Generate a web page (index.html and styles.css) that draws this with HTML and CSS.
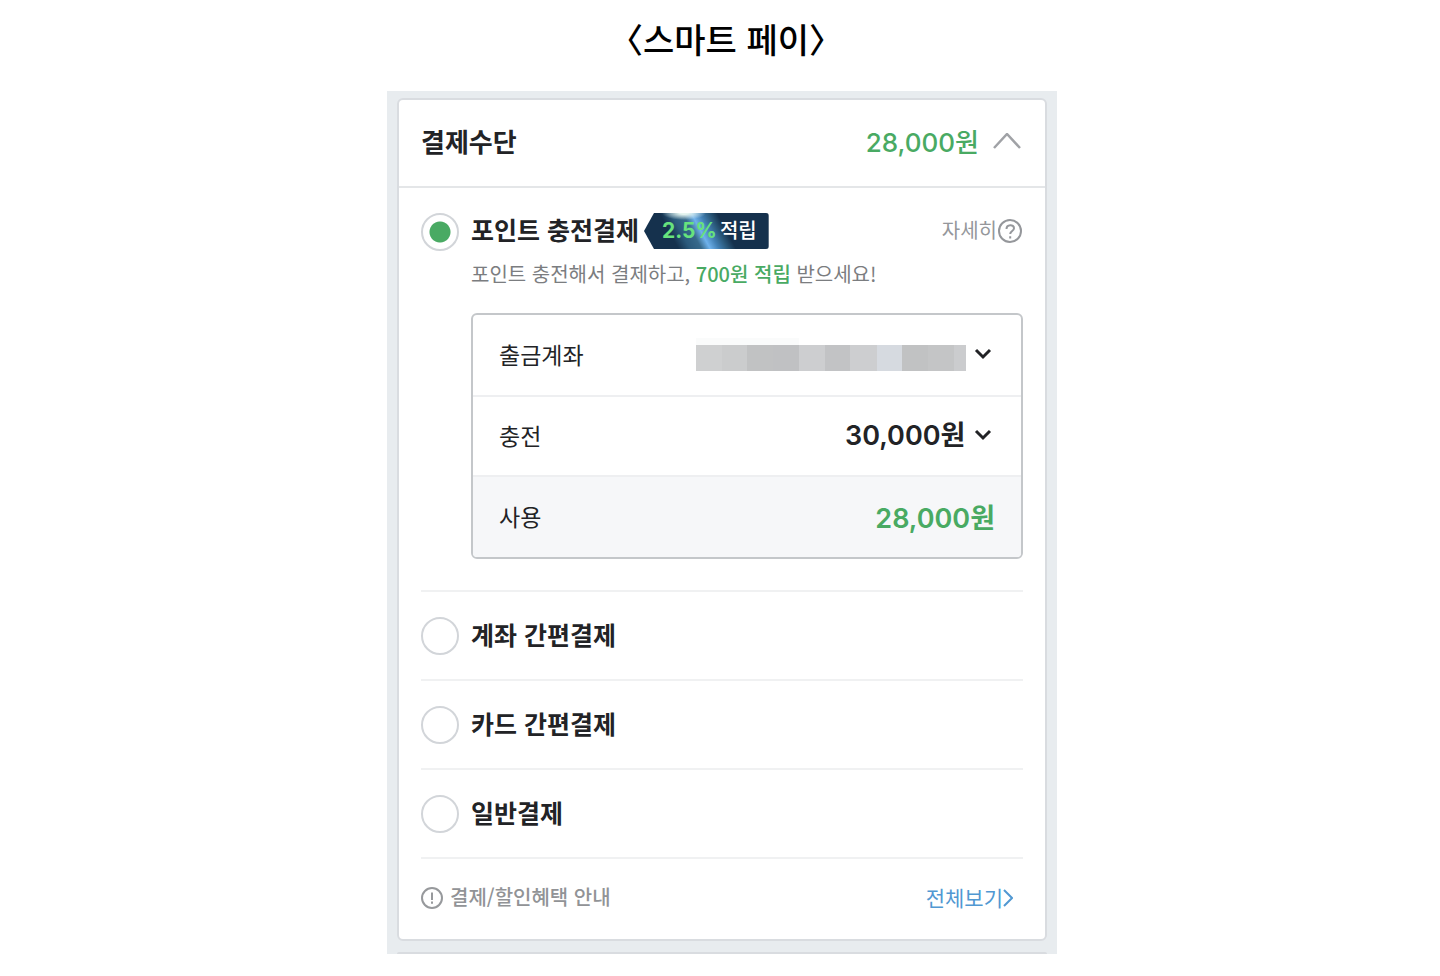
FILE: index.html
```html
<!DOCTYPE html>
<html lang="ko">
<head>
  <meta charset="UTF-8">
  <meta name="viewport" content="width=device-width, initial-scale=1.0">
  <title>스마트 페이</title>
  <link rel="stylesheet" href="styles.css">
</head>
<body>
  <h1>〈스마트 페이〉</h1>
  <main class="panel">
    <section class="card">
      <header class="card-header">
        <h2>결제수단</h2>
        <span class="total">28,000원</span>
        <button class="toggle" type="button" aria-label="접기">
          <svg width="28" height="16" viewBox="0 0 28 16" fill="none" stroke="#a0a2a6" stroke-width="2.500"><path d="M1 15 14 1l13 14"/></svg>
        </button>
      </header>

      <form class="methods">
        <div class="method point">
          <input type="radio" name="method" id="point" checked>
          <div class="point-body">
            <div class="point-title">
              <label for="point">포인트 충전결제</label>
              <span class="badge"><b>2.5%</b><span>적립</span></span>
              <a href="#" class="detail"><span>자세히</span><svg width="26" height="26" viewBox="0 0 26 26" fill="none" stroke="#95979b" stroke-width="2"><circle cx="13" cy="13" r="11"/><path d="M9.500 11c0-5 7.500-5 7.500-.8 0 2.800-3.800 2.700-3.800 5.800M13.200 18.200v2.300"/></svg></a>
            </div>
            <p class="desc">포인트 충전해서 결제하고, <em>700원 적립</em> 받으세요!</p>

            <div class="charge-box">
              <div class="row">
                <label for="account">출금계좌</label>
                <select id="account" class="masked"><option></option></select>
                <svg class="chevron" width="18" height="12" viewBox="0 0 18 12"><path d="m2 2 7 7 7-7"/></svg>
              </div>
              <div class="row">
                <label for="charge">충전</label>
                <select id="charge"><option>30,000원</option></select>
                <svg class="chevron" width="18" height="12" viewBox="0 0 18 12"><path d="m2 2 7 7 7-7"/></svg>
              </div>
              <div class="row use">
                <span>사용</span>
                <strong>28,000원</strong>
              </div>
            </div>
          </div>
        </div>

        <div class="method">
          <input type="radio" name="method" id="bank">
          <label for="bank">계좌 간편결제</label>
        </div>
        <div class="method">
          <input type="radio" name="method" id="credit">
          <label for="credit">카드 간편결제</label>
        </div>
        <div class="method">
          <input type="radio" name="method" id="normal">
          <label for="normal">일반결제</label>
        </div>
      </form>

      <footer class="card-footer">
        <svg width="22" height="22" viewBox="0 0 22 22" fill="none" stroke="#97999c" stroke-width="2"><circle cx="11" cy="11" r="10"/><path d="M11 5.500v7.500M11 14.500v2.200"/></svg>
        <span>결제/할인혜택 안내</span>
        <a href="#"><span>전체보기</span><svg width="10" height="18" viewBox="0 0 10 18" fill="none" stroke="#5198d2" stroke-width="2"><path d="m1 1 8 8-8 8"/></svg></a>
      </footer>
    </section>
    <div class="next-card"></div>
  </main>
</body>
</html>
```
FILE: styles.css
```css
* {
  box-sizing: border-box;
}
body {
  margin: 0;
  padding-left: 4px;
  background: #fff;
  color: #222326;
  font-family: "Noto Sans CJK KR", sans-serif;
}
h1 {
  margin: 0;
  padding: 15px 0 28px 8px;
  font-size: 34px;
  line-height: 48px;
  font-weight: 500;
  text-align: center;
  color: #000;
}
h2 {
  margin: 0;
  padding-bottom: 4px;
  font-size: 26px;
  line-height: 40px;
}
button {
  border: 0;
  padding: 0;
  background: none;
}
svg {
  display: block;
  flex: none;
}
a {
  display: flex;
  align-items: center;
  text-decoration: none;
}
.panel {
  max-width: 670px;
  margin: 0 auto;
  padding: 7px 10px 0;
  background: #e8ecef;
}
.card {
  border: 2px solid #d9dce0;
  border-radius: 6px;
  background: #fff;
}
.card-header {
  display: flex;
  align-items: center;
  height: 88px;
  padding: 0 24px 0 22px;
  border-bottom: 2px solid #e4e6e8;
}
.total {
  margin-left: auto;
  color: #49aa63;
  font-family: Inter, "Noto Sans CJK KR", sans-serif;
  font-size: 26px;
  line-height: 40px;
  font-weight: 500;
}
.toggle {
  margin-left: 14px;
  padding-bottom: 4px;
}
.methods {
  padding: 0 22px;
}
.method {
  display: flex;
  align-items: center;
  gap: 12px;
  padding: 25px 0 24px;
  border-bottom: 2px solid #f0f1f2;
}
.method > label,
.point-title label {
  padding-bottom: 4px;
  font-size: 25px;
  line-height: 34px;
  font-weight: 700;
}
.point {
  align-items: flex-start;
  padding-bottom: 31px;
}
.point-body {
  flex: 1;
}
.point-title {
  display: flex;
  align-items: center;
  height: 36px;
}
input[type="radio"] {
  appearance: none;
  flex: none;
  width: 38px;
  height: 38px;
  margin: 0;
  border: 2px solid #d2d5d9;
  border-radius: 50%;
}
input[type="radio"]:checked {
  background: radial-gradient(circle, #49aa63 10px, transparent 11px);
}
.badge {
  display: flex;
  align-items: center;
  gap: 3px;
  margin-left: 5px;
  padding: 0 12px 0 18px;
  border-radius: 3px;
  background:
    radial-gradient(ellipse 22px 7px at 32% 0, #e6f5f0 20%, transparent),
    linear-gradient(62deg, transparent 24%, #2b5a7c 32%, #37698b 40%, #6fb2ec 46%, #4280b4 52%, #2b5a7c 58%, transparent 64%),
    #15314d;
  clip-path: polygon(8% 0, 100% 0, 100% 100%, 8% 100%, 0 50%);
  color: #fff;
  font-size: 20px;
  line-height: 36px;
  font-weight: 500;
}
.badge b {
  color: #67e27d;
  font-family: Inter, sans-serif;
  font-size: 21px;
  font-weight: 700;
}
.badge span,
.detail span,
.card-footer span {
  padding-bottom: 2px;
  line-height: 34px;
}
.detail {
  margin-left: auto;
  color: #95979b;
  font-size: 20px;
}
.desc {
  margin: 10px 0 24px;
  color: #7b7d80;
  font-size: 20px;
  line-height: 30px;
}
.desc em {
  color: #49aa63;
  font-style: normal;
  font-weight: 500;
}
.charge-box {
  border: 2px solid #c4c7ca;
  border-radius: 6px;
  overflow: hidden;
}
.row {
  display: flex;
  align-items: center;
  height: 80px;
  padding: 0 29px 2px 26px;
  font-size: 23px;
}
.row + .row {
  border-top: 2px solid #eeeff1;
}
.row select {
  appearance: none;
  margin-left: auto;
  padding: 0;
  border: 0;
  background: none;
  color: #222326;
}
.row select,
.row strong {
  font-family: Inter, "Noto Sans CJK KR", sans-serif;
  font-size: 27px;
  font-weight: 600;
}
.row .masked {
  width: 270px;
  height: 33px;
  background:
    linear-gradient(#fafbfb, #fafbfb) 0 0 / 103px 7px no-repeat,
    linear-gradient(90deg,
      #cfd0d1 26px, #cbcccd 26px 51px, #c1c2c3 51px 77px,
      #c0c1c3 77px 103px, #cdced0 103px 129px, #c2c3c5 129px 154px,
      #cdced0 154px 181px, #d6dae0 181px 206px, #c1c2c3 206px 232px,
      #c4c5c6 232px 258px, #cbccce 258px) 0 7px / 100% 26px no-repeat;
}
.chevron {
  margin-left: 8px;
  fill: none;
  stroke: #222326;
  stroke-width: 3;
}
.row.use {
  height: 82px;
  padding-right: 26px;
  background: #f6f7f9;
}
.use strong {
  margin-left: auto;
  color: #49aa63;
}
.card-footer {
  display: flex;
  align-items: center;
  gap: 7px;
  height: 80px;
  padding: 0 32px 2px 22px;
  color: #919396;
  font-size: 20px;
  font-weight: 500;
}
.card-footer a {
  margin-left: auto;
  color: #5198d2;
  font-size: 21px;
  font-weight: 400;
}
.next-card {
  height: 2px;
  margin-top: 11px;
  border-radius: 6px 6px 0 0;
  background: #d9dce0;
}
```
